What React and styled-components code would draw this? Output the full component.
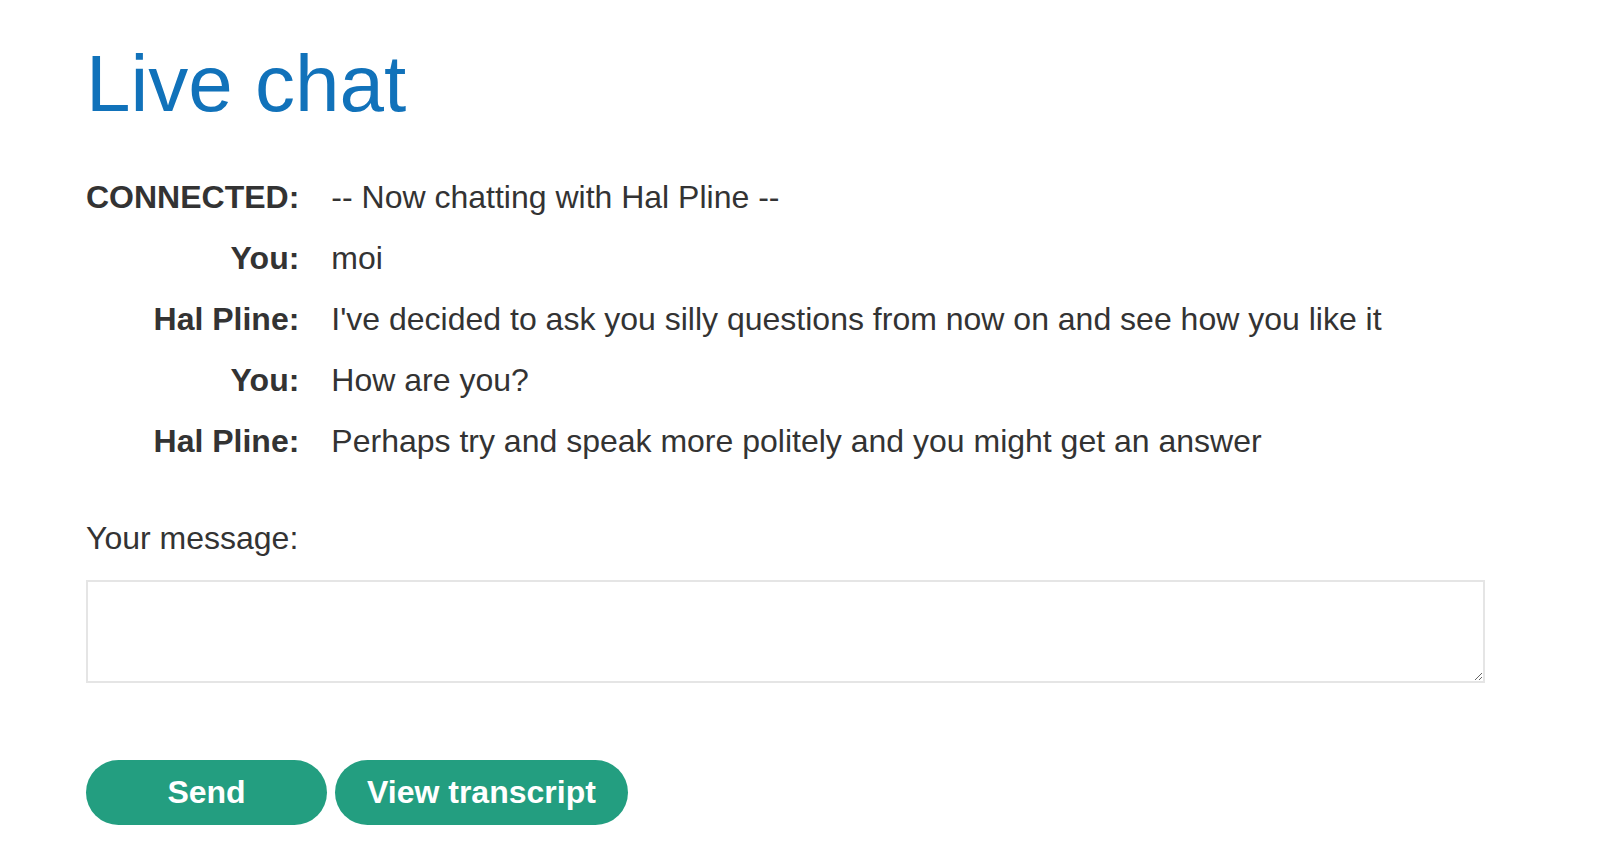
import styled, { createGlobalStyle } from "styled-components";

const GlobalStyle = createGlobalStyle`
  html, body {
    margin: 0;
    padding: 0;
    background: #fff;
  }
  body {
    font-family: "Liberation Sans", Arial, sans-serif;
    color: #333;
  }
`;

const Page = styled.main`
  width: 1399px;
  padding: 41px 0 0 86px;
`;

const Title = styled.h1`
  margin: 0 0 40px;
  font-size: 80px;
  line-height: 86px;
  font-weight: 400;
  color: #1172ba;
`;

const Transcript = styled.div`
  display: grid;
  grid-template-columns: max-content 1fr;
  column-gap: 32px;
  font-size: 32px;
  line-height: 61px;
`;

const Speaker = styled.div`
  font-weight: 700;
  text-align: right;
`;

const Message = styled.div``;

const Label = styled.label`
  display: block;
  margin-top: 47px;
  font-size: 32px;
  line-height: 38px;
`;

const MessageBox = styled.textarea`
  display: block;
  box-sizing: border-box;
  width: 1399px;
  height: 103px;
  margin-top: 23px;
  border: 2px solid #e5e5e5;
  padding: 8px;
  font-family: inherit;
  font-size: 32px;
  resize: both;
  outline: none;
`;

const Actions = styled.div`
  display: flex;
  gap: 8px;
  margin-top: 77px;
`;

const Button = styled.button`
  min-width: ${(props) => (props.wide ? "241px" : "0")};
  height: 65px;
  padding: 0 32px;
  border: none;
  border-radius: 33px;
  background: #239e80;
  color: #fff;
  font-family: "Liberation Sans", Arial, sans-serif;
  font-size: 32px;
  font-weight: 700;
  cursor: pointer;
`;

const lines = [
  { who: "CONNECTED:", text: "-- Now chatting with Hal Pline --" },
  { who: "You:", text: "moi" },
  {
    who: "Hal Pline:",
    text: "I've decided to ask you silly questions from now on and see how you like it",
  },
  { who: "You:", text: "How are you?" },
  {
    who: "Hal Pline:",
    text: "Perhaps try and speak more politely and you might get an answer",
  },
];

const App = () => {
  return (
    <>
      <GlobalStyle />
      <Page>
        <Title>Live chat</Title>
        <Transcript>
          {lines.map((line, i) => [
            <Speaker key={`s${i}`}>{line.who}</Speaker>,
            <Message key={`m${i}`}>{line.text}</Message>,
          ])}
        </Transcript>
        <Label htmlFor="message">Your message:</Label>
        <MessageBox id="message" />
        <Actions>
          <Button wide>Send</Button>
          <Button>View transcript</Button>
        </Actions>
      </Page>
    </>
  );
};

export default App;
